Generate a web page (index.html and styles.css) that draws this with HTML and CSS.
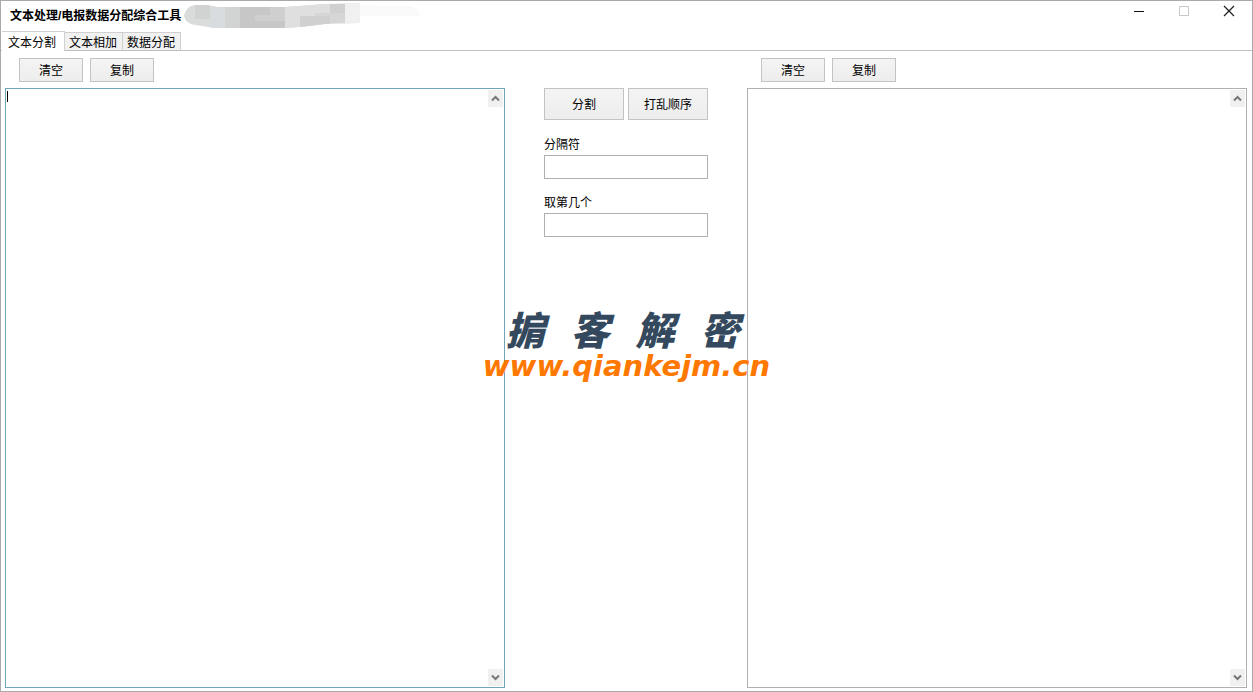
FILE: index.html
```html
<!DOCTYPE html>
<html lang="zh-CN">
<head>
<meta charset="utf-8">
<title>文本处理/电报数据分配综合工具</title>
<link rel="stylesheet" href="styles.css">
</head>
<body>
<div class="window">
  <header class="titlebar">
    <h1 class="title">文本处理/电报数据分配综合工具</h1>
    <svg class="mosaic" width="236" height="28" viewBox="184 0 236 28" aria-hidden="true">
      <defs>
        <clipPath id="smear"><path d="M184 15Q186 5 195 4L207 4L217 6L286 6L325 3L360 2V22L325 23L300 26L285 27L215 27L195 24Q186 23 184 15Z"/></clipPath>
      </defs>
      <g clip-path="url(#smear)">
        <path fill="#dadcdc" d="M184 0H360V28H184Z"/>
        <path fill="#d1d3d3" d="M195 0H210V18H195Z"/>
        <path fill="#d8dcde" d="M210 0H225V28H210Z"/>
        <path fill="#d2d3d3" d="M225 0H240V28H225Z"/>
        <path fill="#c6c7c6" d="M240 6H285V28H240Z"/>
        <path fill="#cecfce" d="M255 14H270V6H285V20H255Z"/>
        <path fill="#dfdfdf" d="M285 0H330V28H285Z"/>
        <path fill="#d0d0d0" d="M300 15H330V28H300ZM330 3H345V12H330Z"/>
        <path fill="#d6d6d6" d="M315 12H345V22H330V15H315Z"/>
        <path fill="#f0f0f0" d="M345 0H360V28H345Z"/>
      </g>
      <path fill="#fafafa" d="M360 4L410 5L419 9V15H360Z"/>
    </svg>
    <div class="window-controls">
      <button class="control" aria-label="最小化"><svg width="12" height="12" viewBox="0 0 12 12"><path d="M1 6.500H11" stroke="#111"/></svg></button>
      <button class="control" aria-label="最大化" disabled><svg width="12" height="12" viewBox="0 0 12 12"><path d="M1.500 1.500H10.500V10.500H1.500Z" fill="none" stroke="#c8c8c8"/></svg></button>
      <button class="control" aria-label="关闭"><svg width="12" height="12" viewBox="0 0 12 12"><path d="M1 1L11 11M11 1L1 11" stroke="#222" stroke-width="1.300"/></svg></button>
    </div>
  </header>
  <nav class="tabs" role="tablist">
    <button class="tab tab-active" role="tab" aria-selected="true">文本分割</button>
    <button class="tab" role="tab" aria-selected="false">文本相加</button>
    <button class="tab" role="tab" aria-selected="false">数据分配</button>
  </nav>
  <main class="workspace">
    <section class="pane">
      <div class="toolbar"><button class="btn">清空</button><button class="btn">复制</button></div>
      <div class="editor">
        <textarea class="text text-focused" aria-label="输入文本"></textarea>
        <span class="caret"></span>
        <div class="scrollbar">
          <button class="arrow" aria-label="向上滚动"><svg width="9" height="7" viewBox="0 0 9 7"><path d="M1 5.500L4.500 2L8 5.500"/></svg></button>
          <button class="arrow" aria-label="向下滚动"><svg width="9" height="7" viewBox="0 0 9 7"><path d="M1 1.500L4.500 5L8 1.500"/></svg></button>
        </div>
      </div>
    </section>
    <section class="options">
      <div class="actions"><button class="btn btn-large">分割</button><button class="btn btn-large">打乱顺序</button></div>
      <div class="field"><label for="separator">分隔符</label><input id="separator" type="text"></div>
      <div class="field"><label for="index">取第几个</label><input id="index" type="text"></div>
    </section>
    <section class="pane">
      <div class="toolbar"><button class="btn">清空</button><button class="btn">复制</button></div>
      <div class="editor">
        <textarea class="text" aria-label="输出文本"></textarea>
        <div class="scrollbar">
          <button class="arrow" aria-label="向上滚动"><svg width="9" height="7" viewBox="0 0 9 7"><path d="M1 5.500L4.500 2L8 5.500"/></svg></button>
          <button class="arrow" aria-label="向下滚动"><svg width="9" height="7" viewBox="0 0 9 7"><path d="M1 1.500L4.500 5L8 1.500"/></svg></button>
        </div>
      </div>
    </section>
  </main>
  <div class="watermark">
    <div class="brand"><span>掮</span><span>客</span><span>解</span><span>密</span></div>
    <div class="site">www.qiankejm.cn</div>
  </div>
</div>
</body>
</html>
```

FILE: styles.css
```css
* {
  box-sizing: border-box;
}

body {
  margin: 0;
  color: #000;
  background: #fff;
  font: 12px/16px "Liberation Sans", "Noto Sans CJK SC", sans-serif;
}

button,
input,
textarea {
  margin: 0;
  font: inherit;
  color: inherit;
  border-radius: 0;
  outline: none;
}

.window {
  position: relative;
  display: flex;
  flex-direction: column;
  min-height: 100vh;
  border: 1px solid #aaa;
}

.titlebar {
  display: flex;
  align-items: flex-start;
  gap: 3px;
  height: 30px;
  padding-left: 9px;
}

.title {
  margin: 0;
  padding-top: 7px;
  font-size: 12px;
  line-height: 16px;
  white-space: nowrap;
}

.window-controls {
  display: flex;
  margin-left: auto;
  padding-right: 1px;
}

.control {
  display: flex;
  align-items: center;
  justify-content: center;
  width: 45px;
  height: 20px;
  padding: 0;
  border: 0;
  background: none;
}

.tabs {
  display: flex;
  align-items: flex-end;
  height: 20px;
  padding-left: 1px;
  border-bottom: 1px solid #bfbfbf;
}

.tab {
  height: 18px;
  padding: 2px 5px 0 4px;
  border: 1px solid #d0d0d0;
  border-left: 0;
  border-bottom: 0;
  background: #f1f1f1;
  white-space: nowrap;
}

.tab-active {
  height: 20px;
  margin-bottom: -1px;
  padding: 2px 8px 0 6px;
  background: #fff;
}

.workspace {
  display: grid;
  grid-template-columns: 1fr 242px 1fr;
  flex: 1;
  padding: 7px 5px 3px 4px;
}

.pane {
  display: flex;
  flex-direction: column;
}

.toolbar {
  display: flex;
  gap: 7px;
  height: 30px;
  padding-left: 14px;
}

.btn {
  width: 64px;
  height: 24px;
  padding: 2px 0 0;
  border: 1px solid #c3c3c3;
  background: linear-gradient(#f4f4f4, #ededed);
}

.editor {
  position: relative;
  display: flex;
  flex: 1;
}

.text {
  flex: 1;
  min-width: 0;
  padding: 1px 18px 1px 2px;
  border: 1px solid #b0b0b0;
  background: #fff;
  resize: none;
}

.text-focused {
  border-color: #72a5b8;
}

.caret {
  position: absolute;
  top: 3px;
  left: 2px;
  width: 1px;
  height: 11px;
  background: #000;
}

.scrollbar {
  position: absolute;
  top: 2px;
  right: 2px;
  bottom: 2px;
  display: flex;
  flex-direction: column;
  justify-content: space-between;
}

.arrow {
  display: flex;
  align-items: center;
  justify-content: center;
  width: 15px;
  height: 17px;
  padding: 0;
  border: 0;
  background: #f0f0f0;
}

.arrow path {
  fill: none;
  stroke: #777;
  stroke-width: 2;
}

.options {
  padding: 30px 39px 0;
}

.actions {
  display: flex;
  gap: 4px;
  margin-bottom: 17px;
}

.btn-large {
  flex: 1;
  height: 32px;
}

.field {
  display: flex;
  flex-direction: column;
  gap: 2px;
  margin-bottom: 16px;
}

.field input {
  width: 100%;
  height: 24px;
  padding: 0 4px;
  border: 1px solid #b0b0b0;
  background: #fff;
}

.watermark {
  position: absolute;
  top: 50%;
  left: 50%;
  display: flex;
  flex-direction: column;
  align-items: center;
  transform: translate(-50%, -50%);
  pointer-events: none;
  white-space: nowrap;
}

.brand {
  display: flex;
  gap: 26px;
  padding-right: 8px;
  color: #34495e;
  font: italic 900 39px/40px "Noto Sans CJK SC", sans-serif;
}

.site {
  color: #ff7800;
  font: italic bold 29px/36px "DejaVu Sans", sans-serif;
}
```
